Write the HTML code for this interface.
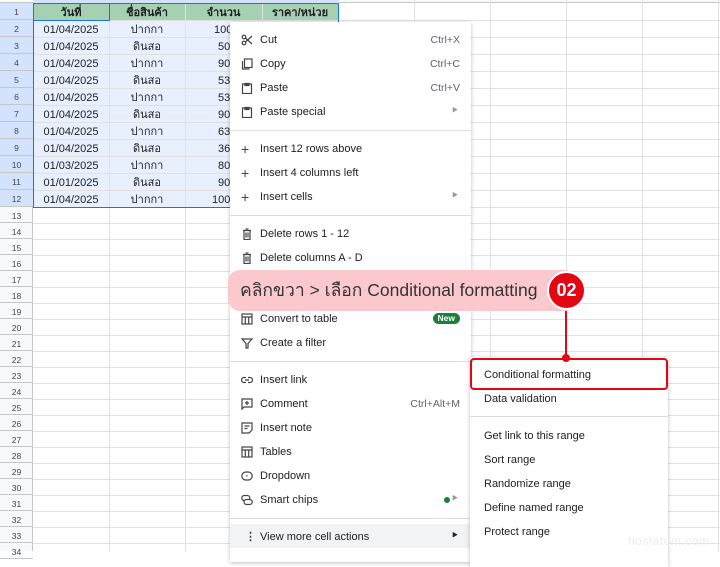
<!DOCTYPE html>
<html><head><meta charset="utf-8"><style>
*{margin:0;padding:0;box-sizing:border-box}
body{width:720px;height:551px;overflow:hidden;position:relative;background:#fff;font-family:"Liberation Sans","Noto Sans CJK SC",sans-serif;color:#202124}
.a{position:absolute}
.rh div{position:absolute;left:0;width:33px;text-align:center;font-size:8.5px;color:#444;border-bottom:1px solid #c4c7c5;padding-top:1px}
.vl{position:absolute;top:0;height:551px;width:1px;background:#e1e1e1}
.hl{position:absolute;left:33px;width:687px;height:1px;background:#e1e1e1}
.c{position:absolute;height:17px;line-height:17px;font-size:11px;text-align:center;padding-top:2px}
.mi{position:absolute;left:0;width:241px;height:24px;line-height:24px;font-size:11px;color:#202124}
.mi .t{position:absolute;left:30px;top:1px}
.mi .k{position:absolute;right:11px;top:1px;color:#5f6368;font-size:10.5px}
.mi .ar{position:absolute;right:13px;color:#999;font-size:6px}
.mi .ic{position:absolute;left:11px;top:7px;width:12px;height:12px}
.sep{position:absolute;left:0;width:241px;height:1px;background:#dadce0}
.si{position:absolute;left:14px;font-size:11px;line-height:24px;height:24px;padding-top:1px}
</style></head><body>
<div class="a" style="left:0;top:0;width:720px;height:3px;background:#f8f9fa;border-bottom:1px solid #c4c7c5"></div>
<div class="a" style="left:33px;top:0;width:305px;height:3px;background:#d3e3fd"></div>
<div class="a" style="left:0;top:3px;width:33px;height:548px;background:#f8f9fa;border-right:1px solid #c4c7c5"></div>
<div class="a" style="left:0;top:3px;width:33px;height:204px;background:#d3e3fd"></div>
<div class="a" style="left:33px;top:3px;width:305px;height:17px;background:#a5d0b2"></div>
<div class="a" style="left:33px;top:20px;width:305px;height:187px;background:#e8f0fe"></div>
<div class="vl" style="left:109px"></div><div class="vl" style="left:185px"></div><div class="vl" style="left:262px"></div><div class="vl" style="left:338px"></div><div class="vl" style="left:414px"></div><div class="vl" style="left:490px"></div><div class="vl" style="left:566px"></div><div class="vl" style="left:642px"></div><div class="vl" style="left:718px"></div>
<div class="hl" style="top:20px"></div><div class="hl" style="top:37px"></div><div class="hl" style="top:54px"></div><div class="hl" style="top:71px"></div><div class="hl" style="top:88px"></div><div class="hl" style="top:105px"></div><div class="hl" style="top:122px"></div><div class="hl" style="top:139px"></div><div class="hl" style="top:156px"></div><div class="hl" style="top:173px"></div><div class="hl" style="top:190px"></div><div class="hl" style="top:207px"></div>
<div class="hl" style="top:223px"></div><div class="hl" style="top:239px"></div><div class="hl" style="top:255px"></div><div class="hl" style="top:271px"></div><div class="hl" style="top:287px"></div><div class="hl" style="top:303px"></div><div class="hl" style="top:319px"></div><div class="hl" style="top:335px"></div><div class="hl" style="top:351px"></div><div class="hl" style="top:367px"></div><div class="hl" style="top:383px"></div><div class="hl" style="top:399px"></div><div class="hl" style="top:415px"></div><div class="hl" style="top:431px"></div><div class="hl" style="top:447px"></div><div class="hl" style="top:463px"></div><div class="hl" style="top:479px"></div><div class="hl" style="top:495px"></div><div class="hl" style="top:511px"></div><div class="hl" style="top:527px"></div><div class="hl" style="top:543px"></div>
<div class="rh">
<div style="top:3px;height:17px;line-height:17px">1</div><div style="top:20px;height:17px;line-height:17px">2</div><div style="top:37px;height:17px;line-height:17px">3</div><div style="top:54px;height:17px;line-height:17px">4</div><div style="top:71px;height:17px;line-height:17px">5</div><div style="top:88px;height:17px;line-height:17px">6</div><div style="top:105px;height:17px;line-height:17px">7</div><div style="top:122px;height:17px;line-height:17px">8</div><div style="top:139px;height:17px;line-height:17px">9</div><div style="top:156px;height:17px;line-height:17px">10</div><div style="top:173px;height:17px;line-height:17px">11</div><div style="top:190px;height:17px;line-height:17px">12</div>
<div style="top:207px;height:16px;line-height:16px">13</div><div style="top:223px;height:16px;line-height:16px">14</div><div style="top:239px;height:16px;line-height:16px">15</div><div style="top:255px;height:16px;line-height:16px">16</div><div style="top:271px;height:16px;line-height:16px">17</div><div style="top:287px;height:16px;line-height:16px">18</div><div style="top:303px;height:16px;line-height:16px">19</div><div style="top:319px;height:16px;line-height:16px">20</div><div style="top:335px;height:16px;line-height:16px">21</div><div style="top:351px;height:16px;line-height:16px">22</div><div style="top:367px;height:16px;line-height:16px">23</div><div style="top:383px;height:16px;line-height:16px">24</div><div style="top:399px;height:16px;line-height:16px">25</div><div style="top:415px;height:16px;line-height:16px">26</div><div style="top:431px;height:16px;line-height:16px">27</div><div style="top:447px;height:16px;line-height:16px">28</div><div style="top:463px;height:16px;line-height:16px">29</div><div style="top:479px;height:16px;line-height:16px">30</div><div style="top:495px;height:16px;line-height:16px">31</div><div style="top:511px;height:16px;line-height:16px">32</div><div style="top:527px;height:16px;line-height:16px">33</div><div style="top:543px;height:16px;line-height:16px">34</div>
</div>
<div class="c" style="left:33px;top:3px;width:76px;font-weight:bold">วันที่</div>
<div class="c" style="left:109px;top:3px;width:76px;font-weight:bold">ชื่อสินค้า</div>
<div class="c" style="left:185px;top:3px;width:77px;font-weight:bold">จำนวน</div>
<div class="c" style="left:262px;top:3px;width:76px;font-weight:bold">ราคา/หน่วย</div>
<div class="c" style="left:33px;top:20px;width:76px">01/04/2025</div><div class="c" style="left:109px;top:20px;width:76px">ปากกา</div><div class="c" style="left:214px;top:20px;text-align:left">100</div>
<div class="c" style="left:33px;top:37px;width:76px">01/04/2025</div><div class="c" style="left:109px;top:37px;width:76px">ดินสอ</div><div class="c" style="left:218px;top:37px;text-align:left">50</div>
<div class="c" style="left:33px;top:54px;width:76px">01/04/2025</div><div class="c" style="left:109px;top:54px;width:76px">ปากกา</div><div class="c" style="left:218px;top:54px;text-align:left">90</div>
<div class="c" style="left:33px;top:71px;width:76px">01/04/2025</div><div class="c" style="left:109px;top:71px;width:76px">ดินสอ</div><div class="c" style="left:218px;top:71px;text-align:left">53</div>
<div class="c" style="left:33px;top:88px;width:76px">01/04/2025</div><div class="c" style="left:109px;top:88px;width:76px">ปากกา</div><div class="c" style="left:218px;top:88px;text-align:left">53</div>
<div class="c" style="left:33px;top:105px;width:76px">01/04/2025</div><div class="c" style="left:109px;top:105px;width:76px">ดินสอ</div><div class="c" style="left:218px;top:105px;text-align:left">90</div>
<div class="c" style="left:33px;top:122px;width:76px">01/04/2025</div><div class="c" style="left:109px;top:122px;width:76px">ปากกา</div><div class="c" style="left:218px;top:122px;text-align:left">63</div>
<div class="c" style="left:33px;top:139px;width:76px">01/04/2025</div><div class="c" style="left:109px;top:139px;width:76px">ดินสอ</div><div class="c" style="left:218px;top:139px;text-align:left">36</div>
<div class="c" style="left:33px;top:156px;width:76px">01/03/2025</div><div class="c" style="left:109px;top:156px;width:76px">ปากกา</div><div class="c" style="left:218px;top:156px;text-align:left">80</div>
<div class="c" style="left:33px;top:173px;width:76px">01/01/2025</div><div class="c" style="left:109px;top:173px;width:76px">ดินสอ</div><div class="c" style="left:218px;top:173px;text-align:left">90</div>
<div class="c" style="left:33px;top:190px;width:76px">01/04/2025</div><div class="c" style="left:109px;top:190px;width:76px">ปากกา</div><div class="c" style="left:212px;top:190px;text-align:left">100</div>
<div class="a" style="left:33px;top:3px;width:306px;height:205px;border:1px solid #1a73e8"></div>
<div class="a" style="left:33px;top:3px;width:77px;height:18px;border:1px solid #1a73e8"></div>

<div class="a" style="left:230px;top:22px;width:241px;height:540px;background:#fff;box-shadow:0 1px 4px rgba(0,0,0,.25)">
<div class="mi" style="top:5px"><svg class="ic" viewBox="0 0 12 12" fill="none" stroke="#444" stroke-width="1.2"><circle cx="3" cy="3" r="1.8"/><circle cx="3" cy="9" r="1.8"/><path d="M4.5 4L11 10M4.5 8L11 2"/></svg><span class="t">Cut</span><span class="k">Ctrl+X</span></div>
<div class="mi" style="top:29px"><svg class="ic" viewBox="0 0 12 12" fill="none" stroke="#444" stroke-width="1.2"><rect x="3.5" y="1" width="7.5" height="8.5"/><path d="M1.5 3v8h7"/></svg><span class="t">Copy</span><span class="k">Ctrl+C</span></div>
<div class="mi" style="top:53px"><svg class="ic" viewBox="0 0 12 12" fill="none" stroke="#444" stroke-width="1.2"><rect x="1.5" y="2" width="9" height="9.5"/><path d="M4 1.5h4v2H4z" fill="#444"/></svg><span class="t">Paste</span><span class="k">Ctrl+V</span></div>
<div class="mi" style="top:77px"><svg class="ic" viewBox="0 0 12 12" fill="none" stroke="#444" stroke-width="1.2"><rect x="1.5" y="2" width="9" height="9.5"/><path d="M4 1.5h4v2H4z" fill="#444"/></svg><span class="t">Paste special</span><span class="ar">▶</span></div>
<div class="sep" style="top:108px"></div>
<div class="mi" style="top:114px"><span class="ic" style="top:1px;font-size:14px;color:#444">+</span><span class="t">Insert 12 rows above</span></div>
<div class="mi" style="top:138px"><span class="ic" style="top:1px;font-size:14px;color:#444">+</span><span class="t">Insert 4 columns left</span></div>
<div class="mi" style="top:162px"><span class="ic" style="top:1px;font-size:14px;color:#444">+</span><span class="t">Insert cells</span><span class="ar">▶</span></div>
<div class="sep" style="top:193px"></div>
<div class="mi" style="top:199px"><svg class="ic" viewBox="0 0 12 12" fill="none" stroke="#444" stroke-width="1.2"><path d="M2 2.5h8M4.5 1h3M3 2.5v9h6v-9M5 4.5v5M7 4.5v5"/></svg><span class="t">Delete rows 1 - 12</span></div>
<div class="mi" style="top:223px"><svg class="ic" viewBox="0 0 12 12" fill="none" stroke="#444" stroke-width="1.2"><path d="M2 2.5h8M4.5 1h3M3 2.5v9h6v-9M5 4.5v5M7 4.5v5"/></svg><span class="t">Delete columns A - D</span></div>
<div class="mi" style="top:284px"><svg class="ic" viewBox="0 0 12 12" fill="none" stroke="#444" stroke-width="1.2"><rect x="1" y="1" width="10" height="10"/><path d="M1 4h10M4.3 4v7M7.7 4v7"/></svg><span class="t">Convert to table</span><span style="position:absolute;right:11px;top:7px;height:11px;line-height:11px;padding:0 5px;background:#188038;color:#fff;font-size:8.5px;font-weight:bold;border-radius:6px">New</span></div>
<div class="mi" style="top:308px"><svg class="ic" viewBox="0 0 12 12" fill="none" stroke="#444" stroke-width="1.2"><path d="M1 2h10L7 6.5V11H5V6.5z"/></svg><span class="t">Create a filter</span></div>
<div class="sep" style="top:339px"></div>
<div class="mi" style="top:345px"><svg class="ic" viewBox="0 0 12 12" fill="none" stroke="#444" stroke-width="1.2"><path d="M5 3.5H3a2.5 2.5 0 0 0 0 5h2M7 3.5h2a2.5 2.5 0 0 1 0 5H7M4 6h4"/></svg><span class="t">Insert link</span></div>
<div class="mi" style="top:369px"><svg class="ic" viewBox="0 0 12 12" fill="none" stroke="#444" stroke-width="1.2"><path d="M1 1h10v8H3l-2 2z M6 3v4M4 5h4"/></svg><span class="t">Comment</span><span class="k">Ctrl+Alt+M</span></div>
<div class="mi" style="top:393px"><svg class="ic" viewBox="0 0 12 12" fill="none" stroke="#444" stroke-width="1.2"><path d="M1 1h10v7l-3 3H1z M3.5 4h5M3.5 6.5h3"/></svg><span class="t">Insert note</span></div>
<div class="mi" style="top:417px"><svg class="ic" viewBox="0 0 12 12" fill="none" stroke="#444" stroke-width="1.2"><rect x="1" y="1" width="10" height="10"/><path d="M1 4h10M4.3 4v7M7.7 4v7"/></svg><span class="t">Tables</span></div>
<div class="mi" style="top:441px"><svg class="ic" viewBox="0 0 12 12" fill="none" stroke="#444" stroke-width="1.2"><rect x="0.8" y="2" width="10.4" height="8" rx="4"/><path d="M4.8 5.4h2.4L6 6.8z" fill="#444" stroke="none"/></svg><span class="t">Dropdown</span></div>
<div class="mi" style="top:465px"><svg class="ic" viewBox="0 0 12 12" fill="none" stroke="#444" stroke-width="1.2"><rect x="0.8" y="1.5" width="8" height="5" rx="2.5"/><rect x="3" y="5.5" width="8.2" height="5" rx="2.5" fill="#fff"/></svg><span class="t">Smart chips</span><span style="position:absolute;right:21px;top:10px;width:6px;height:6px;border-radius:3px;background:#188038"></span><span class="ar">▶</span></div>
<div class="sep" style="top:496px"></div>
<div class="mi" style="top:502px;background:#f1f3f4"><span class="ic" style="top:1px;left:15px;font-weight:bold;color:#444">⋮</span><span class="t">View more cell actions</span><span class="ar" style="color:#202124">▶</span></div>
</div>

<div class="a" style="left:470px;top:357px;width:198px;height:210px;background:#fff;box-shadow:0 1px 4px rgba(0,0,0,.25)">
<div class="si" style="top:5px">Conditional formatting</div>
<div class="si" style="top:29px">Data validation</div>
<div class="a" style="left:0;top:59px;width:198px;height:1px;background:#dadce0"></div>
<div class="si" style="top:66px">Get link to this range</div>
<div class="si" style="top:90px">Sort range</div>
<div class="si" style="top:114px">Randomize range</div>
<div class="si" style="top:138px">Define named range</div>
<div class="si" style="top:162px">Protect range</div>
</div>
<div class="a" style="left:470px;top:358px;width:198px;height:32px;border:2px solid #e30613;border-radius:4px"></div>

<div class="a" style="left:228px;top:270px;width:340px;height:41px;background:#fbc9cd;border-radius:12px 0 0 12px"></div>
<div class="a" style="left:240px;top:270px;height:41px;line-height:41px;font-size:17.5px;color:#333;white-space:nowrap">คลิกขวา &gt; เลือก Conditional formatting</div>
<div class="a" style="left:547px;top:271px;width:39px;height:39px;border-radius:50%;background:#e30613;border:2px solid #fff;color:#fff;font-weight:bold;font-size:18px;line-height:35px;text-align:center">02</div>
<div class="a" style="left:565px;top:311px;width:2px;height:46px;background:#e30613"></div>
<div class="a" style="left:562px;top:354px;width:8px;height:8px;border-radius:50%;background:#e30613"></div>

<div class="a" style="left:628px;top:534px;font-size:12px;color:#ececec;letter-spacing:.5px">hostatom.com</div>
</body></html>
